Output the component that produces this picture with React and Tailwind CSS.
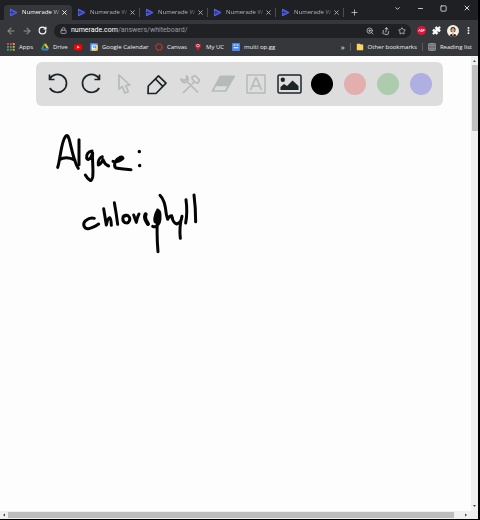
import React from "react";
import { Lock, Star, ZoomIn, Share, Puzzle, MoreVertical, ArrowLeft, ArrowRight, RotateCw, ChevronDown, Minus, Square, X, Plus } from "lucide-react";

const tabs = [1, 2, 3, 4, 5];

function NumeradeLogo() {
  return (
    <svg viewBox="0 0 10 10" className="size-[9px] shrink-0" aria-hidden="true">
      <path d="M1.6 1.2 9 5 1.6 8.8Z" fill="#4550d8" stroke="#5b66ee" strokeWidth="1" strokeLinejoin="round" />
      <path d="M1 5h5M3 3v4" stroke="#27307f" strokeWidth=".8" fill="none" />
    </svg>
  );
}

function Tab({ active }) {
  return (
    <div className={"relative flex h-[15px] w-17 items-center rounded-t-[4px] pl-[5px] " + (active ? "bg-[#35373a] text-white" : "text-[#b4b7bb]")}>
      <NumeradeLogo />
      <button type="button" className="ml-1 w-[37px] text-left whitespace-nowrap [mask-image:linear-gradient(to_right,black_78%,rgba(0,0,0,0.3))]">
        Numerade W
      </button>
      <button type="button" aria-label="Close tab" className="ml-[2px]"><X className="size-[7px]" strokeWidth={3} /></button>
      {!active && <span className="absolute right-0 h-[9px] w-px bg-[#4a4d51]" />}
    </div>
  );
}

function TitleBar() {
  return (
    <header className="flex h-5 items-end bg-[#1e2023] pl-1 text-[6px]">
      {tabs.map((n) => <Tab key={n} active={n === 1} />)}
      <button type="button" aria-label="New tab" className="mb-[3px] ml-[6px] text-[#d3d5d8]"><Plus className="size-[9px]" strokeWidth={2} /></button>
      <div className="mb-2 ml-auto flex items-center gap-4 pr-[7px] text-[#d8dadc]">
        <button type="button" aria-label="Search tabs"><ChevronDown className="size-[7px]" strokeWidth={3} /></button>
        <button type="button" aria-label="Minimise"><Minus className="size-[7px]" strokeWidth={3} /></button>
        <button type="button" aria-label="Maximise"><Square className="size-[7px]" strokeWidth={3} /></button>
        <button type="button" aria-label="Close window"><X className="size-[8px]" strokeWidth={3} /></button>
      </div>
    </header>
  );
}

function AddressBar() {
  return (
    <div className="flex h-[21px] items-center bg-[#35373a] pl-[6px] text-[#909498]">
      <button type="button" aria-label="Back"><ArrowLeft className="size-[10px]" strokeWidth={2.5} /></button>
      <button type="button" aria-label="Forward" className="ml-[6px]"><ArrowRight className="size-[10px]" strokeWidth={2.5} /></button>
      <button type="button" aria-label="Reload" className="ml-[6px] text-white"><RotateCw className="size-[9px]" strokeWidth={3} /></button>
      <div className="ml-[7px] flex h-[14px] flex-1 items-center rounded-full bg-[#1f2124] pr-[5px] pl-[6px] font-[Roboto,sans-serif] text-[7px]">
        <Lock className="size-[7px] text-[#a6a9ad]" strokeWidth={3} />
        <a href="#address" className="ml-1 text-[#999da1]"><span className="text-white">numerade.com</span>/answers/whiteboard/</a>
        <div className="ml-auto flex items-center gap-2 text-[#bfc2c6]">
          <button type="button" aria-label="Zoom"><ZoomIn className="size-2" strokeWidth={2.5} /></button>
          <button type="button" aria-label="Share"><Share className="size-2 rotate-12" strokeWidth={2.5} /></button>
          <button type="button" aria-label="Bookmark"><Star className="size-2" strokeWidth={2.5} /></button>
        </div>
      </div>
      <button type="button" aria-label="Ad blocker" className="ml-[6px] flex size-[9px] items-center justify-center rounded-full bg-[#e3123a]">
        <svg viewBox="0 0 9 9" className="size-[9px]" aria-hidden="true"><path d="M1.5 5.5 2.5 3.5l1 2M4.2 3.5v2h1v-2zM6.2 5.5v-2h1v1h-1" stroke="#fff" strokeWidth=".7" fill="none" /></svg>
      </button>
      <button type="button" aria-label="Extensions" className="ml-[6px] text-white"><Puzzle className="size-[9px] fill-current" /></button>
      <button type="button" aria-label="Profile" className="ml-[6px]">
        <svg viewBox="0 0 12 12" className="size-3" aria-hidden="true">
          <circle cx="6" cy="6" r="6" fill="#f6f1e8" />
          <path d="M3.5 5C3 1 9 1 8.500 5L8 7H4Z" fill="#2b1c16" />
          <ellipse cx="6" cy="5.200" rx="1.700" ry="2.200" fill="#dba678" />
          <path d="M2.500 11C3 8 9 8 9.500 11L6 12Z" fill="#2c2421" />
          <path d="M5.200 7h1.600v3l-.8 1-.8-1Z" fill="#f0c08c" />
        </svg>
      </button>
      <button type="button" aria-label="Menu" className="mr-[5px] ml-[5px] text-white"><MoreVertical className="size-[9px]" strokeWidth={3} /></button>
    </div>
  );
}

const appColors = ["#e5463a", "#e5463a", "#e0b13c", "#46a35c", "#4a86e8", "#e0b13c", "#46a35c", "#46a35c", "#e0b13c"];

function Bookmark({ label, className, children }) {
  return (
    <a href="#bookmark" aria-label={label || "YouTube"} className={"flex items-center gap-1 whitespace-nowrap " + className}>
      <svg viewBox="0 0 10 10" className="size-2 shrink-0" aria-hidden="true">{children}</svg>
      {label}
    </a>
  );
}

function Bookmarks() {
  return (
    <nav className="flex h-[15px] items-center bg-[#35373a] pb-[3px] pl-[7px] text-[6px] text-[#eceded]">
      <Bookmark label="Apps" className="w-[34px]">
        {appColors.map((c, i) => <rect key={i} x={(i % 3) * 3.600} y={Math.floor(i / 3) * 3.600} width="2.400" height="2.400" fill={c} />)}
      </Bookmark>
      <Bookmark label="Drive" className="w-[33px]">
        <path d="M3.500 1h3L10 7H7Z" fill="#f6c12e" /><path d="M3.500 1 0 7l1.500 2.500L5 3.500Z" fill="#2ba24c" /><path d="M3 7h7L8.500 9.500h-7Z" fill="#3b78e7" />
      </Bookmark>
      <Bookmark className="w-4">
        <rect y="1.500" width="10" height="7.500" rx="2" fill="#f00" /><path d="m4 3.500 3 1.700-3 1.800Z" fill="#fff" />
      </Bookmark>
      <Bookmark label="Google Calendar" className="w-[65px]">
        <rect width="10" height="10" rx="1" fill="#3f7de8" /><path d="M7.500 2.500H10V8l-2 2H2V7.500h5.500Z" fill="#f8bd28" /><path d="M2 2h6v6H2Z" fill="#fff" /><path d="M3 3.500h1.500v3M6 3.500h1v3H6Z" stroke="#4285f4" fill="none" />
      </Bookmark>
      <Bookmark label="Canvas" className="w-[39px]">
        <circle cx="5" cy="5" r="4" fill="none" stroke="#d9332d" strokeWidth="1.700" strokeDasharray="2.300 .8" />
      </Bookmark>
      <Bookmark label="My UC" className="w-[38px]">
        <path d="M1 1h8v4L5 10 1 5Z" fill="#b51d32" /><circle cx="5" cy="3.500" r="2.200" fill="#efdada" /><path d="M3.500 3h3M5 3v3" stroke="#9c1930" />
      </Bookmark>
      <Bookmark label="multi op.gg" className="w-12">
        <rect width="10" height="10" rx="1" fill="#4687ee" /><path d="M2 2.500h2.500M6 2.500h2M2 6h6" stroke="#fff" strokeWidth="1.300" />
      </Bookmark>
      <button type="button" aria-label="More bookmarks" className="ml-auto text-[8px]">»</button>
      <span className="mx-[5px] h-2 w-px bg-[#5b5e61]" />
      <Bookmark label="Other bookmarks" className="">
        <path d="M1 1h4l1 1h3v7H1Z" fill="#fbd65f" />
      </Bookmark>
      <span className="mx-[5px] h-2 w-px bg-[#5b5e61]" />
      <Bookmark label="Reading list" className="mr-[6px]">
        <path d="M1 1h8v8H1ZM5 1v8M6 3h2M6 5h2M6 7h2M2 3h2M2 5h2M2 7h2" fill="none" stroke="#c5c8ca" />
      </Bookmark>
    </nav>
  );
}

const dark = "text-[#1c2428]";
const pale = "text-[#b7baba]";

const tools = [
  { name: "Undo", tone: dark, art: <path d="M2.500 1.500v5h5M2.500 6.300A9 9 0 1 1 2.800 15" /> },
  { name: "Redo", tone: dark, art: <path d="M19.500 1.500v5h-5M19.500 6.300A9 9 0 1 0 19.200 15" /> },
  { name: "Select", tone: pale, art: <path d="M6 2v14l3.500-2.500 2.200 6.500 3.600-1.300-2.500-6.200 4-.5Z" /> },
  { name: "Pen", tone: dark, art: <path d="m2 20.500.3-7.500L12.500 2.800l7.500 7.400L10 20.500ZM9.500 6l7.300 7.300" /> },
  { name: "Tools", tone: pale, art: <path d="M4 20 16 8M8.500 9 19 19.500M2 6a3.600 3.600 0 0 0 5.500 3 3.600 3.600 0 0 0 0-6v3L5.500 7.500ZM13 4l3-1.500L20.500 7 19 10l-2.500-.5-3-3Z" /> },
  { name: "Eraser", tone: pale, art: <><path d="M8.500 3.500H22L13.500 18H.5Z" /><path d="M8.500 3.500H22l-5.500 9H4Z" fill="currentColor" /></> },
  { name: "Text", tone: pale, art: <><path d="M2 2h18v18H2Z" strokeWidth="1.500" /><path d="m5.500 17 5-12h1l5 12M7.500 13h7" /></> },
];

function Toolbar() {
  return (
    <div role="toolbar" aria-label="Whiteboard tools" className="mt-[6px] mr-7 ml-9 flex h-11 items-center justify-between rounded-md bg-[#dddddd] px-[11px]">
      {tools.map((t) => (
        <button key={t.name} type="button" aria-label={t.name} className={t.tone}>
          <svg viewBox="0 0 22 22" className="size-[22px] overflow-visible" fill="none" stroke="currentColor" strokeWidth="1.700" strokeLinejoin="round" aria-hidden="true">{t.art}</svg>
        </button>
      ))}
      <button type="button" aria-label="Image" className={dark}>
        <svg viewBox="0 0 22 22" className="size-[22px] overflow-visible" aria-hidden="true">
          <rect x="0" y="2" width="23" height="18" rx="1.500" fill="none" stroke="currentColor" strokeWidth="1.500" />
          <circle cx="4.800" cy="6.800" r="2.200" fill="currentColor" />
          <path d="M2.500 17v-3l3.500-3 3 2 5.500-5.500L20.500 13v4Z" fill="currentColor" />
        </svg>
      </button>
      <button type="button" aria-label="Black" className="size-[22px] rounded-full bg-black" />
      <button type="button" aria-label="Red" className="size-[22px] rounded-full bg-[#e3aeae]" />
      <button type="button" aria-label="Green" className="size-[22px] rounded-full bg-[#adcbad]" />
      <button type="button" aria-label="Blue" className="size-[22px] rounded-full bg-[#afafe1]" />
    </div>
  );
}

function Ink() {
  return (
    <svg role="img" aria-label="Algae: chlorophyll" viewBox="0 0 540 420" className="mt-[14px] ml-10 h-[140px] w-[180px]" fill="none" stroke="#050505" strokeWidth="9" strokeLinecap="round" strokeLinejoin="round">
      <path d="M53 142C60 125 63 65 76 50Q82 41 87 56C95 84 101 125 115 145M58 119Q80 106 105 121" />
      <path d="M117 59V134" />
      <path d="M156 93C145 94 138 104 140 115Q143 123 153 112L158 99C156 120 161 153 158 171Q154 187 148 179Q141 174 136 165" />
      <path d="M187 110C178 113 173 124 175 135Q182 133 189 119Q194 133 206 138" />
      <path d="M219 124C229 128 244 121 249 115Q246 108 237 114C222 122 219 143 232 145Q248 148 273 149" />
      <path d="M298 94v1M299 136v1" strokeWidth="10" />
      <path d="M163 295Q150 291 137 302C126 312 132 327 145 326Q158 324 176 312" />
      <path d="M191 266L199 315Q203 295 209 293Q213 295 214 316" />
      <path d="M223 248Q229 280 233 313" />
      <path d="M257 286C246 287 246 303 255 308C268 312 274 296 265 288Q260 284 255 288" />
      <path d="M281 285Q286 299 289 307Q291 292 297 282" />
      <path d="M317 283Q313 290 317 300L324 312" strokeWidth="12" />
      <path d="M353 270Q349 340 354 395M338 319C350 324 361 309 360 291C361 267 351 266 347 285Q342 300 346 306" />
      <path d="M360 226Q375 239 379 283L383 298Q390 281 397 294" />
      <path d="M395 287Q398 309 410 312Q424 308 426 289Q417 320 421 355" />
      <path d="M438 239Q443 277 437 309" />
      <path d="M462 225Q467 263 467 305" />
    </svg>
  );
}

export default function App() {
  return (
    <div className="flex h-screen flex-col overflow-hidden border-r-2 border-b border-black bg-[#fdfdfd] font-['Open_Sans','Noto_Sans',sans-serif]">
      <TitleBar />
      <AddressBar />
      <Bookmarks />
      <div className="flex min-h-0 flex-1">
        <main className="min-w-0 flex-1">
          <Toolbar />
          <Ink />
        </main>
        <div className="flex w-[7px] flex-col items-center bg-[#f0f0f0]">
          <svg viewBox="0 0 7 9" className="h-[9px] w-[7px]" aria-hidden="true"><path d="m2 6 1.500-2L5 6Z" fill="#555" /></svg>
          <div className="h-[66px] w-[6px] bg-[#c1c1c1]" />
          <svg viewBox="0 0 7 9" className="mt-auto h-[9px] w-[7px]" aria-hidden="true"><path d="m2 3 1.500 2L5 3Z" fill="#444" /></svg>
        </div>
      </div>
      <div className="flex h-2 items-center bg-[#efefef] pr-2">
        <svg viewBox="0 0 8 8" className="size-2" aria-hidden="true"><path d="M5 2.500 3 4l2 1.500Z" fill="#444" /></svg>
        <div className="mr-2 h-[6px] flex-1 bg-[#bdbdbd]" />
        <svg viewBox="0 0 8 8" className="size-2" aria-hidden="true"><path d="m3 2.500 2 1.500-2 1.500Z" fill="#444" /></svg>
      </div>
    </div>
  );
}
